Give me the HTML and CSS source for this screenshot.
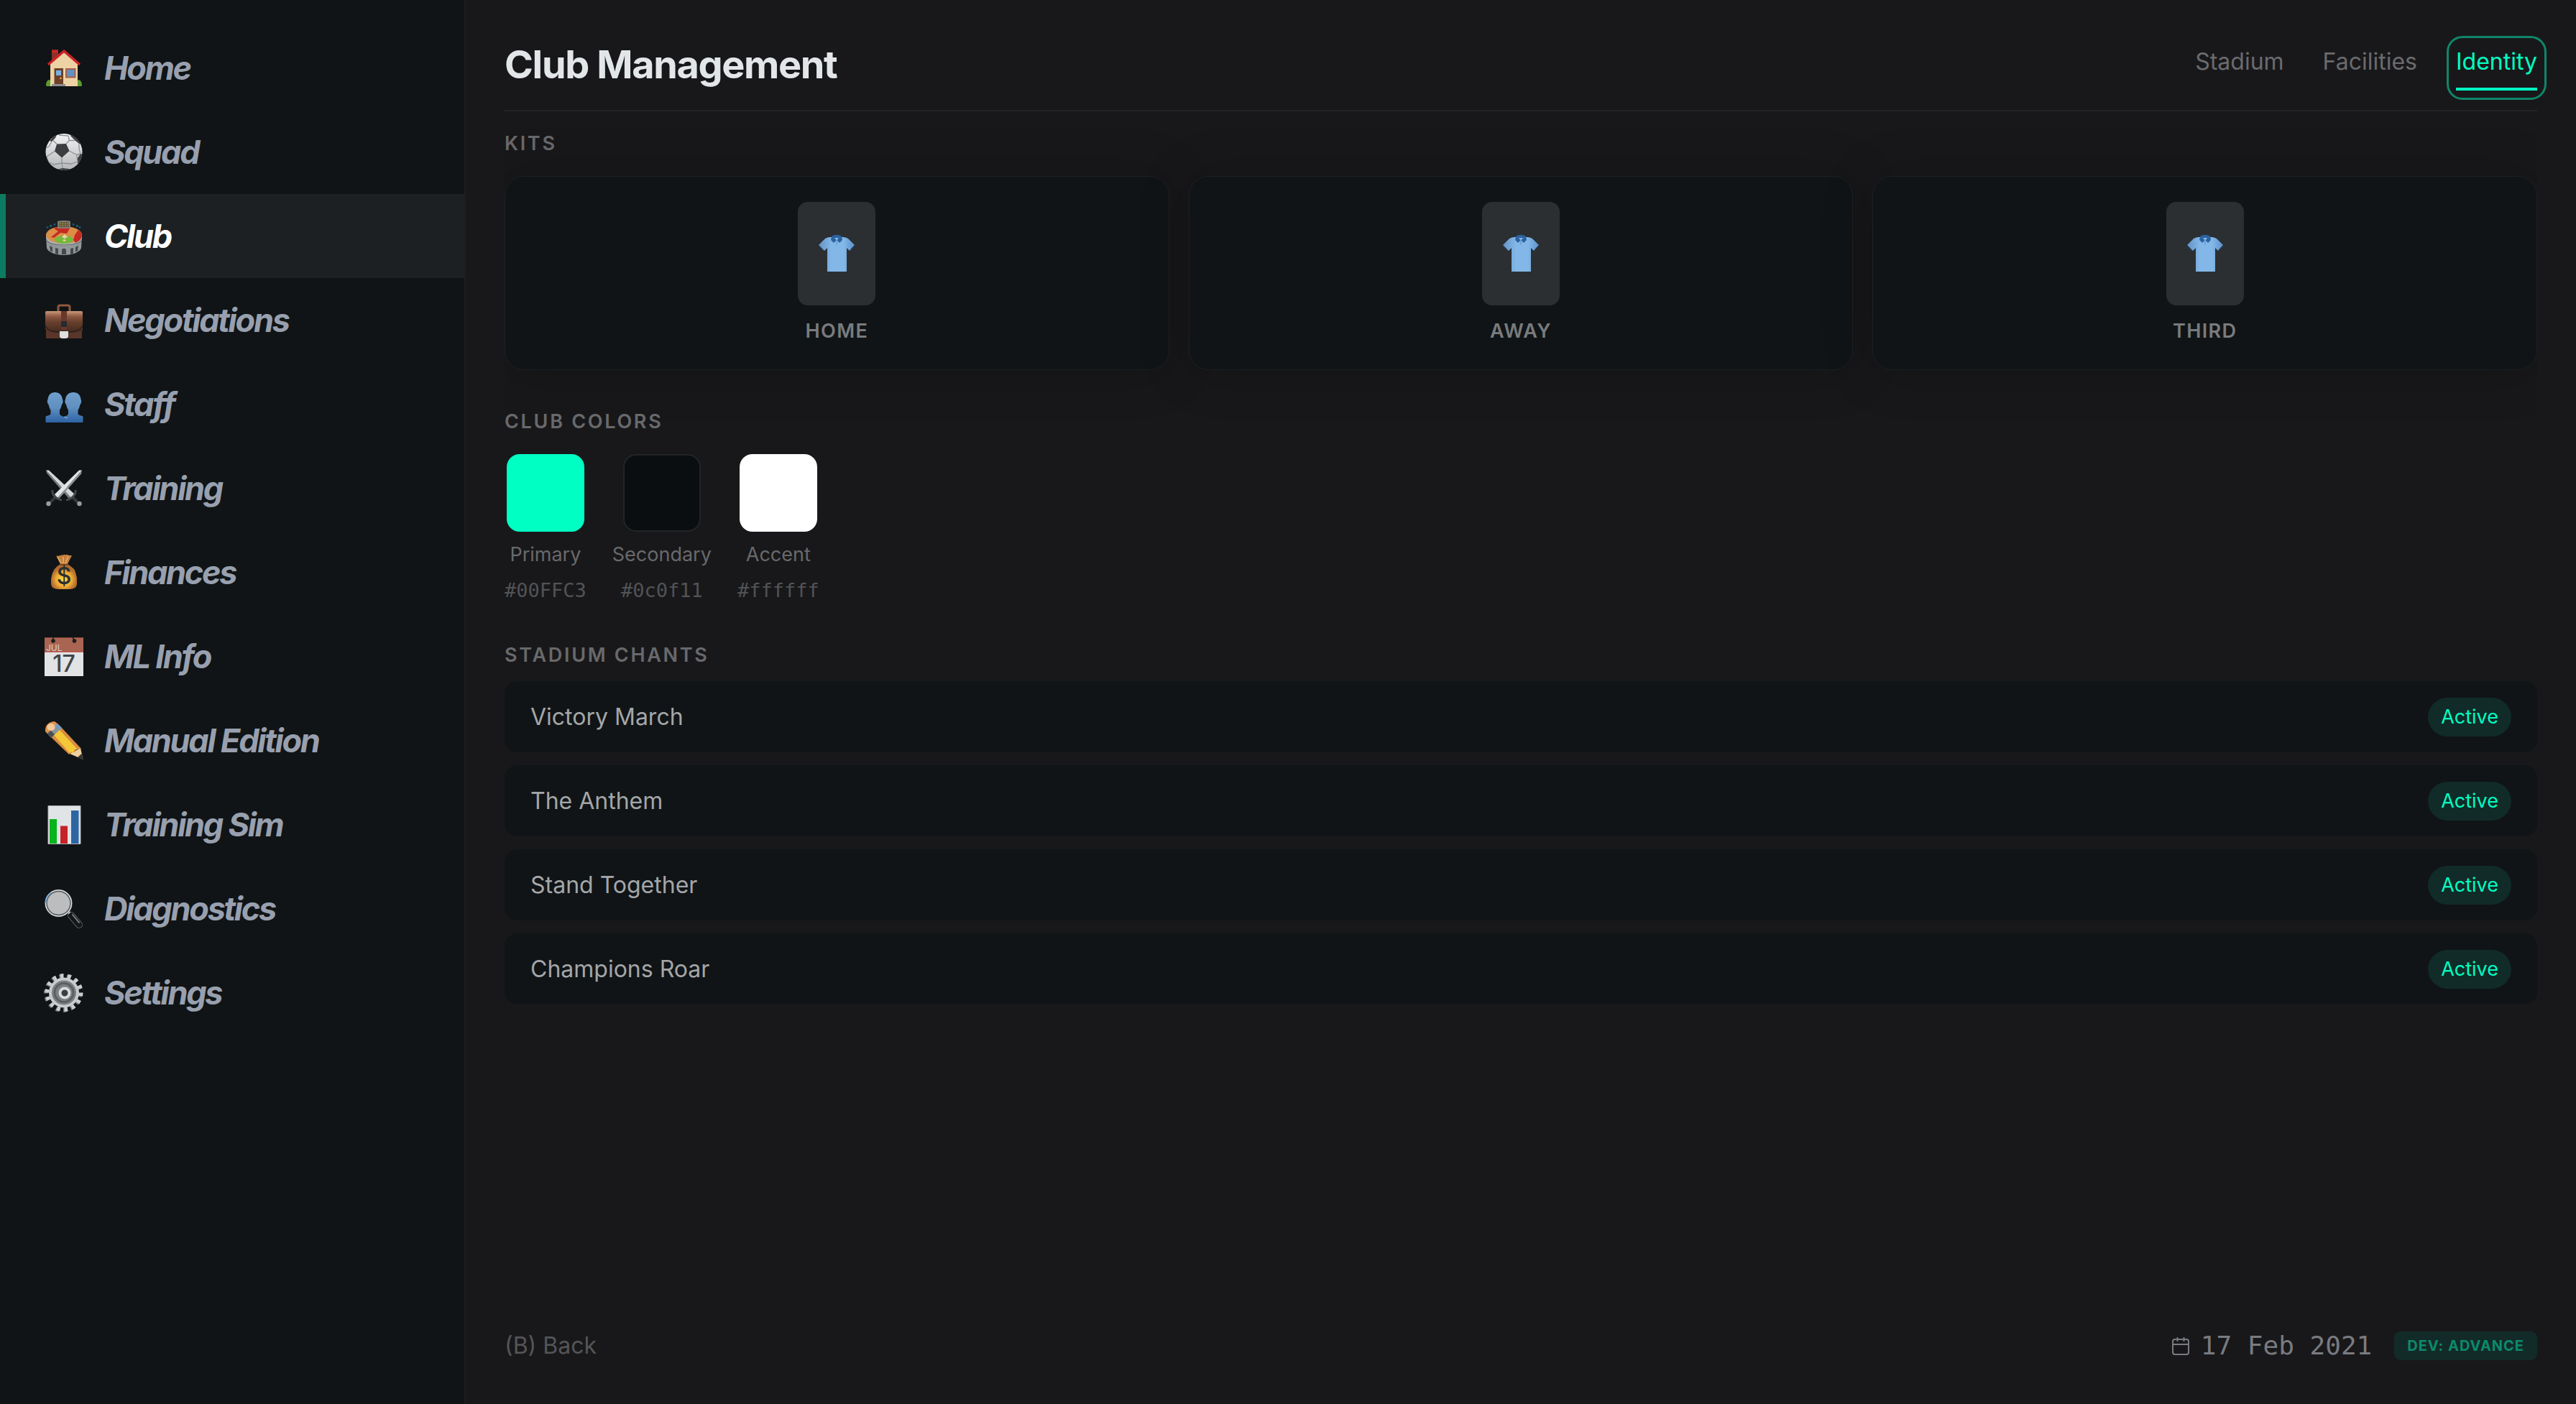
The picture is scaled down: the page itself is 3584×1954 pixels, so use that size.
FILE: index.html
```html
<!DOCTYPE html>
<html lang="en">
<head>
    <meta charset="utf-8">
    <meta name="viewport" content="width=device-width, initial-scale=1">
    <title>Club Management</title>
    <link rel="stylesheet" href="styles.css">
</head>
<body>
<div class="app">
    <nav class="sidebar">
        <a class="nav-item" href="#home">
            <svg class="nav-icon" viewBox="0 0 54 54" aria-hidden="true">
                <path fill="#8c3226" d="M10 1.500h9v16h-9z"/><path fill="#c3282a" d="M10 1.500h9v4h-9z"/>
                <path fill="#5d9c2c" d="M2 51c0-5 2-8 5-8l3 3v6H3zM52 51c0-5-2-8-5-8l-3 3v6h7z"/>
                <path fill="#edd2a4" d="M8 21 27 5l19 16v31H8z"/>
                <path fill="none" stroke="#ce2227" stroke-width="3.500" stroke-linejoin="round" d="M5 22 27 3l22 19"/>
                <path fill="#6d4128" d="M13.500 27h12.500v22H13.500z"/><path fill="#77b0e2" d="M16 30h7v7h-7z"/>
                <circle cx="22.500" cy="41" r="1.200" fill="#f0b33a"/>
                <path fill="#5f92c4" stroke="#a8604a" stroke-width="2" d="M30 28h12.500v11.500H30z"/>
                <path fill="#8d8d90" d="M10 49h19v3H10z"/>
            </svg>
            <span>Home</span>
        </a>
        <a class="nav-item" href="#squad">
            <svg class="nav-icon" viewBox="0 0 54 54" aria-hidden="true">
                <defs>
                    <linearGradient id="ball" x1="0" y1="0" x2="0" y2="1"><stop offset="0" stop-color="#f2f3f4"/><stop offset="1" stop-color="#b4b6b8"/></linearGradient>
                    <clipPath id="ball-clip"><circle cx="27" cy="26.500" r="25.500"/></clipPath>
                </defs>
                <circle cx="27" cy="26.500" r="25.500" fill="url(#ball)"/>
                <g clip-path="url(#ball-clip)">
                    <path fill="#3b3d40" d="m17 15.500 13-.5 4.500 10-10.500 9.500-10-9zM37 1l-1 3 6 6 6 5 5 0-5-10zM50 29l-4 6 0 7 5 1 5-12zM17 51l8-2 9 1 3 3-10 3zM0 30l3 3 3 8-1 4-7-8zM7 11l5-5 5-3-2 4-5 5z"/>
                    <path fill="none" stroke="#8d9093" stroke-width="1.300" d="m17 15.500-5-5M30 15l4.500-4.500L33 4l-13-1M34.500 10.500l8 0M34.500 25l10 5.500M24 34.500v7.500M14 25.500l-7.500 5M6.500 30.500 3 33M24 42l-11 2-6-3M24 42l13 1 9-3-1.500-9.500M24 42l1 7M10 12l-4 7-4 2M44.500 30.500 50 29M48 15l0 7 2 7"/>
                </g>
            </svg>
            <span>Squad</span>
        </a>
        <a class="nav-item active" href="#club" aria-current="page">
            <svg class="nav-icon" viewBox="0 0 54 54" aria-hidden="true">
                <path fill="#929799" d="M2 27h50l-1 16c-1 5-11 10-24 10S4 48 3 43z"/>
                <ellipse cx="27" cy="27" rx="25" ry="13" fill="#adb2b3"/>
                <ellipse cx="27" cy="25" rx="25" ry="12" fill="#dc8e46"/>
                <path fill="#c62a23" d="M13 16c4-2 9-3 14-3l9 1-5 9-9-1-9 7-4-1 10-8zM47 18c4 3 6 7 4 11-1 3-4 5-8 7l-3-4 2-7z"/>
                <ellipse cx="27" cy="31.500" rx="13" ry="5.500" fill="#76b83c"/>
                <path fill="#edd3a2" d="m24 28 4-4 4 4-4 2zM25 32l3-1 2 2-3 1z"/>
                <path fill="#66553f" stroke="#8a8d8e" stroke-width="1.500" d="M19 6.500c5-1 11-1 16 0V15H19z"/>
                <path stroke="#a3b53e" stroke-dasharray="2 1.500" d="M21 9h13M21 12h12"/>
                <path fill="none" stroke="#5f6466" d="M3 33c4 8 44 8 48 0"/>
                <path fill="#45494c" d="M7 40l4 2v7l-3-2zM15 43l4 1v8l-4-1zM24 52v-6c1-3 5-3 6 0v6zM36 44l4-1v8l-4 1zM43 42l4-2-1 7-3 2z"/>
                <path fill="#1c62a0" d="m2 14 4-1-2 3zM51 14l-4-1 2 3zM12 10l4-1-2 3zM42 10l-4-1 2 3z"/><path fill="#18a088" d="m7 12 3-1-1 3zM47 12l-3-1 1 3z"/>
            </svg>
            <span>Club</span>
        </a>
        <a class="nav-item" href="#negotiations">
            <svg class="nav-icon" viewBox="0 0 54 54" aria-hidden="true">
                <defs><linearGradient id="leather" x1="0" y1="0" x2="0" y2="1"><stop offset="0" stop-color="#c99a7a"/><stop offset=".25" stop-color="#8d5842"/><stop offset=".5" stop-color="#68402d"/><stop offset="1" stop-color="#44291f"/></linearGradient></defs>
                <path fill="none" stroke="#8f5940" stroke-width="3" d="M19 14V8c0-2 2-2 3-2h10c2 0 3 1 3 2v6"/>
                <path fill="#59352a" d="M2 17h50v35H2z"/>
                <path fill="url(#leather)" d="M3 14h48c2 0 2 1 2 3v24l-9 2-17 1-17-1-9-4V17c0-2 0-3 2-3z"/>
                <path fill="none" stroke="#2b211e" stroke-width="1.500" d="M1 34c4 8 11 9 20 9h12c9 0 16-1 20-9"/>
                <path fill="#69382c" d="M23 14h8v26h-8z"/><path fill="#252b30" d="M23 28h8v8h-8z"/>
                <path fill="#dcdedf" d="M21 42h12v7c0 2-2 3-4 3h-4c-2 0-4-1-4-3z"/>
            </svg>
            <span>Negotiations</span>
        </a>
        <a class="nav-item" href="#staff">
            <svg class="nav-icon" viewBox="0 0 54 54" aria-hidden="true">
                <defs>
                    <linearGradient id="bust" x1="0" y1="0" x2="0" y2="1"><stop offset="0" stop-color="#6f9fcd"/><stop offset=".5" stop-color="#6190c0"/><stop offset="1" stop-color="#2d62a5"/></linearGradient>
                </defs>
                <path fill="url(#bust)" d="M14.500 10c6 0 10 4 10.500 10 1 1 1 5-1 7-1 4-2 6-3 8v5c1 3 4 3 6 4 2-1 5-1 6-4v-5c-1-2-2-4-3-8-2-2-2-6-1-7 .5-6 4.500-10 11-10s10 4 10.500 10c1 1 1 5-1 7-1 4-2 6-3 8v5c1 3 7 2 7 4v8h-52v-8c0-2 6-1 7-4v-5c-1-2-2-4-3-8-2-2-2-6-1-7 .5-6 4-10 10-10z"/>
                <path stroke="#9dbde0" d="m27 44 5 2"/>
            </svg>
            <span>Staff</span>
        </a>
        <a class="nav-item" href="#training">
            <svg class="nav-icon" viewBox="0 0 54 54" aria-hidden="true">
                <path stroke="#34373b" stroke-width="4" d="m37 37 10 10"/>
                <path fill="#d3d5d7" d="M2 1.500h4L42 35l-5 5z"/><path fill="#797c80" d="m2 1.500 1 4L34 41l3-1z"/>
                <path fill="none" stroke="#44484b" stroke-width="3" d="M43 29c1 6-4 12-13 14"/>
                <circle cx="48.500" cy="48" r="3.200" fill="#999da0"/>
                <path stroke="#34373b" stroke-width="4" d="M17 37 7 47"/>
                <path fill="#e3e4e5" d="M52 1.500h-4L14 35l4 5z"/><path fill="#8f9295" d="m52 1.500-1 5L21 40l-3 0z"/>
                <path fill="none" stroke="#44484b" stroke-width="3" d="M11 29c-1 6 4 12 13 14"/>
                <circle cx="5.500" cy="48" r="3.200" fill="#999da0"/>
            </svg>
            <span>Training</span>
        </a>
        <a class="nav-item" href="#finances">
            <svg class="nav-icon" viewBox="0 0 54 54" aria-hidden="true">
                <defs><radialGradient id="bag" cy=".6"><stop offset="0" stop-color="#ffdb45"/><stop offset=".6" stop-color="#efab35"/><stop offset="1" stop-color="#b06b2c"/></radialGradient></defs>
                <path fill="#c57f3c" d="M16 3c3 2 3 0 6 0l5-1 5 0 2 1 4 0-6 12 9 7c4 8 5 18 3 24-2 4-8 4-17 4s-15 0-17-4c-2-8 0-18 4-24l8-7z"/>
                <path fill="url(#bag)" d="M21 16h12c8 4 12 14 12 24 0 8-4 10-18 10S9 48 9 40c0-10 4-20 12-24z"/>
                <path fill="none" stroke="#e8b36a" stroke-width="1.500" d="m18 5 5 9M26 5v9M33 4l-4 10"/>
                <path stroke="#7d4425" stroke-width="2" d="M21 16h12"/>
                <text x="27" y="43" class="bag-sign">$</text>
            </svg>
            <span>Finances</span>
        </a>
        <a class="nav-item" href="#ml-info">
            <svg class="nav-icon" viewBox="0 0 54 54" aria-hidden="true">
                <path fill="#e1e3e5" d="M0 0h54v54H0z"/><path fill="#a96552" d="M0 0h54v20.500H0z"/>
                <path fill="none" stroke="#83483b" d="M.5.500h53"/><path stroke="#bb3b36" d="M0 20h54"/>
                <circle cx="12" cy="5" r="2.800" fill="#1b1e20"/><circle cx="41.500" cy="5" r="2.800" fill="#1b1e20"/>
                <path stroke="#1b1e20" stroke-width="1.500" d="M12 0v5M39 0l3 5"/>
                <text x="2" y="18.500" class="cal-month">JUL</text>
                <text x="27" y="48" class="cal-day">17</text>
            </svg>
            <span>ML Info</span>
        </a>
        <a class="nav-item" href="#manual-edition">
            <svg class="nav-icon" viewBox="0 0 54 54" aria-hidden="true">
                <path fill="#efcfa0" d="m35 45 15-8 3.500 16z"/><path fill="#303235" d="m46 50 5.500-5 2 8z"/>
                <path fill="#d98c41" d="m7 20 16-12 28 30-7 1-2 4-5 0-3 3z"/>
                <path fill="#f4c836" d="m12 18 8-7 26 28-4 0-2 4-5 1z"/>
                <path fill="#8d9499" d="M3 16 18 3l6 6L9 23z"/><path fill="#4b5055" d="m3 16 5-4 6 6-5 5z"/><path fill="#6d9bc4" d="m14 6 4-3 6 6-4 3z"/>
                <path fill="#dc9150" d="M1 14C0 6 6 0 14 0l4 3L4 17z"/><ellipse cx="9" cy="8" rx="5.500" ry="5" fill="#f3c99b"/>
            </svg>
            <span>Manual Edition</span>
        </a>
        <a class="nav-item" href="#training-sim">
            <svg class="nav-icon" viewBox="0 0 54 54" aria-hidden="true">
                <path fill="#e0e4e7" stroke="#aeb2b5" d="M5 .5h45v53H5z"/>
                <path fill="#07b41b" d="M7 19h10v34H7z"/><path fill="#c52327" d="M22 28.500h10V53H22z"/><path fill="#2d65a3" d="M37 7h10.500v46H37z"/>
            </svg>
            <span>Training Sim</span>
        </a>
        <a class="nav-item" href="#diagnostics">
            <svg class="nav-icon" viewBox="0 0 54 54" aria-hidden="true">
                <path stroke="#5a5d61" stroke-width="10" stroke-linecap="round" d="m37 36 11 13"/>
                <path stroke="#141618" stroke-width="8" stroke-linecap="round" d="m37 36 11 13"/>
                <path stroke="#707377" stroke-width="2" stroke-linecap="round" d="m39 35 9 11"/>
                <path stroke="#b9bbbd" stroke-width="4" d="m31 29 4 4"/>
                <circle cx="19.500" cy="19" r="17.500" fill="#bcbdbe" stroke="#55585b" stroke-width="3.500"/>
                <circle cx="19.500" cy="19" r="18" fill="none" stroke="#dedfe0" stroke-width="1.500"/>
                <path fill="none" stroke="#78a7d2" stroke-width="2" d="M1.500 19c0-6 3-12 8-15"/>
            </svg>
            <span>Diagnostics</span>
        </a>
        <a class="nav-item" href="#settings">
            <svg class="nav-icon" viewBox="0 0 54 54" aria-hidden="true">
                <circle cx="25.500" cy="27.500" r="23.500" fill="none" stroke="#717477" stroke-width="6" pathLength="28" stroke-dasharray=".9 1.100"/>
                <circle cx="27" cy="26.500" r="23.500" fill="none" stroke="#cbcccd" stroke-width="6" pathLength="28" stroke-dasharray=".9 1.100"/>
                <circle cx="27" cy="26.500" r="19" fill="#7b7e81" stroke="#c8cacb" stroke-width="4"/>
                <circle cx="27" cy="26.500" r="13" fill="none" stroke="#595c60" stroke-width="2.500"/>
                <circle cx="28" cy="27" r="6.500" fill="#3a3d41" stroke="#d8d9da" stroke-width="4"/>
            </svg>
            <span>Settings</span>
        </a>
    </nav>

    <main class="content">
        <header class="page-header">
            <h1>Club Management</h1>
            <div class="tabs" role="tablist">
                <button class="tab" type="button" role="tab" aria-selected="false">Stadium</button>
                <button class="tab" type="button" role="tab" aria-selected="false">Facilities</button>
                <button class="tab selected" type="button" role="tab" aria-selected="true">Identity</button>
            </div>
        </header>

        <div class="panel">
            <section>
                <h2>Kits</h2>
                <div class="kits">
                    <article class="kit">
                        <div class="kit-shirt">
                            <svg class="shirt" viewBox="0 0 54 54" aria-hidden="true">
                                <defs>
                                    <linearGradient id="cloth"><stop offset="0" stop-color="#6592c6"/><stop offset=".35" stop-color="#82b7e7"/><stop offset=".7" stop-color="#82b7e7"/><stop offset="1" stop-color="#5e91ca"/></linearGradient>
                                    <g id="polo">
                                        <path fill="url(#cloth)" d="M20 4c-6 0-8 1-11 4l-7 7 8 8 4-4v33h27V19l4 4 7-8-7-7c-3-3-5-4-11-4z"/>
                                        <path fill="none" stroke="#3266a4" d="m2.500 15.500 7 7.500M51.500 15.500l-7 7.500"/>
                                        <path fill="#2d62a0" d="M20 3c4-3 10-3 14 0l1 5-4 4-4-4-4 4-4-4z"/>
                                        <path fill="#82b7e7" d="M24 5h6l-3 4z"/><path stroke="#5e8fc6" d="M27 9v6"/>
                                    </g>
                                </defs>
                                <use href="#polo"/>
                            </svg>
                        </div>
                        <h3>Home</h3>
                    </article>
                    <article class="kit">
                        <div class="kit-shirt"><svg class="shirt" viewBox="0 0 54 54" aria-hidden="true"><use href="#polo"/></svg></div>
                        <h3>Away</h3>
                    </article>
                    <article class="kit">
                        <div class="kit-shirt"><svg class="shirt" viewBox="0 0 54 54" aria-hidden="true"><use href="#polo"/></svg></div>
                        <h3>Third</h3>
                    </article>
                </div>
            </section>

            <section>
                <h2>Club Colors</h2>
                <div class="colors">
                    <div class="color">
                        <div class="swatch primary"></div>
                        <span class="color-name">Primary</span>
                        <code>#00FFC3</code>
                    </div>
                    <div class="color">
                        <div class="swatch secondary"></div>
                        <span class="color-name">Secondary</span>
                        <code>#0c0f11</code>
                    </div>
                    <div class="color">
                        <div class="swatch accent"></div>
                        <span class="color-name">Accent</span>
                        <code>#ffffff</code>
                    </div>
                </div>
            </section>

            <section>
                <h2>Stadium Chants</h2>
                <ul class="chants">
                    <li class="chant">Victory March <span class="status">Active</span></li>
                    <li class="chant">The Anthem <span class="status">Active</span></li>
                    <li class="chant">Stand Together <span class="status">Active</span></li>
                    <li class="chant">Champions Roar <span class="status">Active</span></li>
                </ul>
            </section>
        </div>

        <footer class="footer">
            <button class="back" type="button">(B) Back</button>
            <div class="date">
                <svg class="date-icon" viewBox="0 0 24 26" aria-hidden="true">
                    <rect x="1" y="4" width="22" height="21" rx="3"/>
                    <path d="M1 11h22M7.500 1v6M16.500 1v6"/>
                </svg>
                <time datetime="2021-02-17">17 Feb 2021</time>
            </div>
            <button class="advance" type="button">DEV: ADVANCE</button>
        </footer>
    </main>
</div>
</body>
</html>
```

FILE: styles.css
```css
* {
    box-sizing: border-box;
}

body {
    margin: 0;
    background: #18181a;
    color: #a4a6a8;
    font-family: Inter, "Liberation Sans", sans-serif;
    font-size: 32px;
    line-height: 45px;
}

h1, h2, h3, ul {
    margin: 0;
    padding: 0;
}

button {
    margin: 0;
    padding: 0;
    border: 0;
    background: none;
    font: inherit;
    cursor: pointer;
}

.app {
    display: flex;
    min-height: 100vh;
}

/* sidebar */
.sidebar {
    flex: none;
    width: 648px;
    padding: 36px 0;
    background: #101416;
    border-right: 2px solid #1c1e20;
}

.nav-item {
    display: flex;
    align-items: center;
    gap: 29px;
    height: 117px;
    padding-left: 54px;
    border-left: 8px solid transparent;
    color: #98a0af;
    font-size: 45px;
    font-style: italic;
    font-weight: 700;
    letter-spacing: -0.05em;
    text-decoration: none;
}

.nav-item.active {
    background: #1c2022;
    border-left-color: #0d7b62;
    color: #fff;
}

.nav-icon {
    width: 54px;
    height: 54px;
    overflow: visible;
}

.nav-icon text {
    font-style: normal;
    letter-spacing: normal;
}

.bag-sign {
    fill: #2d3032;
    font-size: 32px;
    font-weight: 500;
    text-anchor: middle;
}

.cal-month {
    fill: #dfd2cd;
    font-size: 12px;
    font-weight: 400;
}

.cal-day {
    fill: #414447;
    font-size: 32px;
    font-weight: 500;
    text-anchor: middle;
}

/* main area */
.content {
    display: flex;
    flex: 1;
    flex-direction: column;
    min-width: 0;
    padding: 54px;
}

.page-header {
    display: flex;
    align-items: flex-end;
    justify-content: space-between;
    padding-bottom: 27px;
    border-bottom: 2px solid #232426;
}

h1 {
    color: #e3e6e8;
    font-size: 54px;
    font-weight: 700;
    letter-spacing: -0.025em;
    line-height: 72px;
}

.tabs {
    display: flex;
    gap: 54px;
}

.tab {
    padding-bottom: 14px;
    border-bottom: 4px solid transparent;
    color: #6a6b6e;
}

.tab.selected {
    position: relative;
    border-bottom-color: #00ffc3;
    color: #00ffc3;
}

/* focus ring round the current tab */
.tab.selected::after {
    content: "";
    position: absolute;
    inset: -13px -13px -17px;
    border: 3px solid #0f8669;
    border-radius: 22px;
}

.panel {
    display: flex;
    flex: 1;
    flex-direction: column;
    gap: 54px;
    padding-top: 27px;
    overflow: hidden;
}

h2 {
    margin-bottom: 18px;
    color: #68696c;
    font-size: 27px;
    font-weight: 600;
    letter-spacing: 0.1em;
    line-height: 36px;
    text-transform: uppercase;
}

.kits,
.colors {
    margin-top: 27px;
}

.kits {
    display: grid;
    grid-template-columns: repeat(3, 1fr);
    gap: 27px;
}

.kit {
    display: flex;
    flex-direction: column;
    align-items: center;
    gap: 18px;
    padding: 35px;
    background: #101416;
    border: 1px solid #1e2022;
    border-radius: 27px;
    box-shadow: 0 2px 72px rgba(0, 0, 0, 0.2);
}

.kit-shirt {
    display: flex;
    align-items: center;
    justify-content: center;
    width: 108px;
    height: 144px;
    background: #2b2f32;
    border-radius: 14px;
}

.shirt {
    width: 54px;
    height: 54px;
}

.kit h3 {
    color: #797b7e;
    font-size: 27px;
    font-weight: 600;
    letter-spacing: 0.05em;
    line-height: 36px;
    text-transform: uppercase;
}

.colors {
    display: flex;
    gap: 36px;
}

.color {
    display: flex;
    flex-direction: column;
    align-items: center;
    gap: 14px;
    font-size: 27px;
    line-height: 36px;
}

.swatch {
    width: 108px;
    height: 108px;
    border-radius: 18px;
}

.primary {
    background: #00ffc3;
}

.secondary {
    background: #0a0e10;
    border: 2px solid #222426;
}

.accent {
    background: #fff;
}

.color-name {
    color: #68696c;
}

.color code {
    color: #525356;
    font-family: "DejaVu Sans Mono", monospace;
    font-size: 27px;
}

.chants {
    display: flex;
    flex-direction: column;
    gap: 18px;
    list-style: none;
}

.chant {
    display: flex;
    align-items: center;
    justify-content: space-between;
    height: 99px;
    padding: 0 36px;
    background: #101416;
    border-radius: 18px;
}

.status {
    padding: 9px 18px;
    background: #112b28;
    border-radius: 27px;
    color: #00ffc3;
    font-size: 27px;
    line-height: 36px;
}

/* bottom bar */
.footer {
    display: flex;
    align-items: center;
    line-height: 54px;
}

.back {
    margin-right: auto;
    color: #545558;
}

.date {
    display: flex;
    align-items: center;
    gap: 16px;
    margin-right: 31px;
    color: #797b80;
    font-family: "DejaVu Sans Mono", monospace;
    font-size: 36px;
}

.date-icon {
    width: 24px;
    height: 26px;
    fill: none;
    stroke: #797b80;
    stroke-width: 2;
}

.advance {
    padding: 0 18px;
    background: #132b28;
    border-radius: 9px;
    color: #0c8a6c;
    font-size: 20px;
    font-weight: 700;
    letter-spacing: 0.05em;
    line-height: 40px;
}
```
